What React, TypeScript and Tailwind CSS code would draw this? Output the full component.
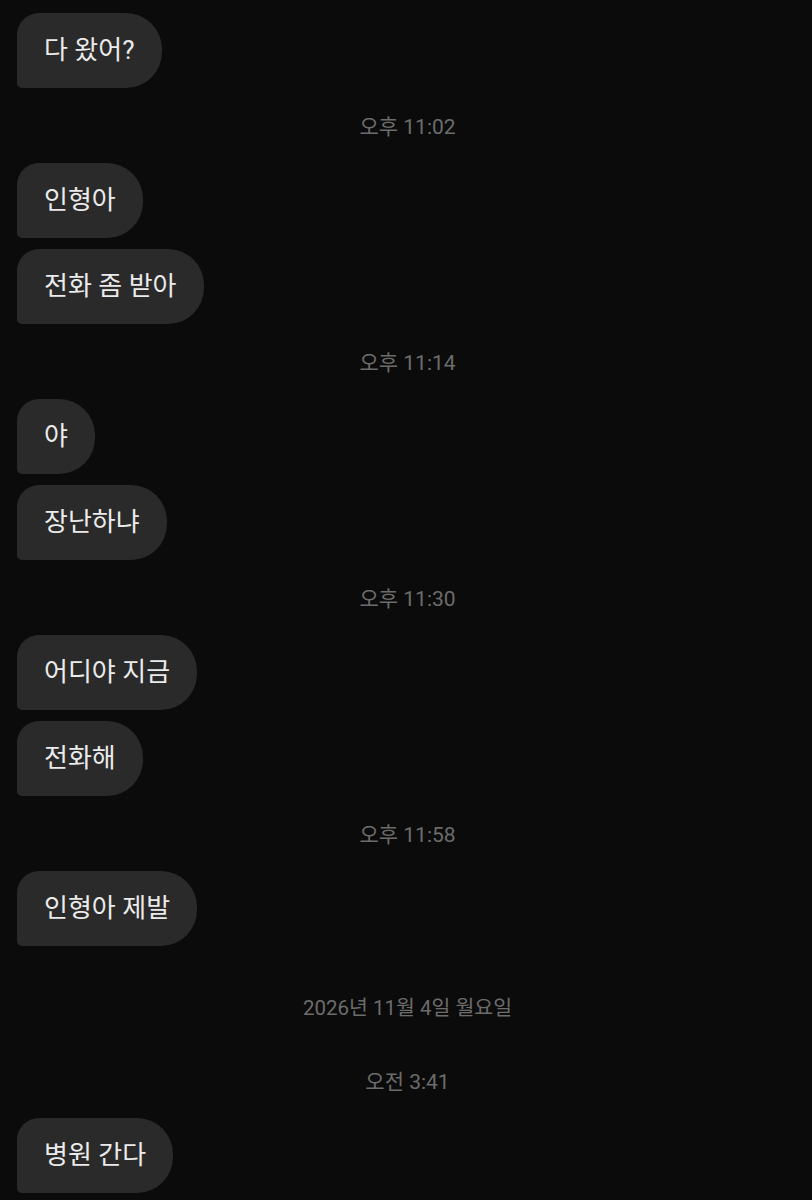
import React from "react";

type Item =
  | { kind: "msg"; text: string }
  | { kind: "time"; text: string }
  | { kind: "date"; text: string };

const items: Item[] = [
  { kind: "msg", text: "다 왔어?" },
  { kind: "time", text: "오후 11:02" },
  { kind: "msg", text: "인형아" },
  { kind: "msg", text: "전화 좀 받아" },
  { kind: "time", text: "오후 11:14" },
  { kind: "msg", text: "야" },
  { kind: "msg", text: "장난하냐" },
  { kind: "time", text: "오후 11:30" },
  { kind: "msg", text: "어디야 지금" },
  { kind: "msg", text: "전화해" },
  { kind: "time", text: "오후 11:58" },
  { kind: "msg", text: "인형아 제발" },
  { kind: "date", text: "2026년 11월 4일 월요일" },
  { kind: "time", text: "오전 3:41" },
  { kind: "msg", text: "병원 간다" },
];

function Bubble({ text, first }: { text: string; first: boolean }) {
  return (
    <div className={first ? "flex" : "flex mt-[11px]"}>
      <div className="h-[75px] flex items-center px-[27px] bg-[#2a2a2a] text-[#ebebeb] text-[26px] rounded-tl-[22px] rounded-tr-[36px] rounded-br-[36px] rounded-bl-[5px] whitespace-nowrap">
        {text}
      </div>
    </div>
  );
}

export default function App() {
  const out: React.ReactNode[] = [];
  let prevMsg = false;
  items.forEach((it, i) => {
    if (it.kind === "msg") {
      out.push(<Bubble key={i} text={it.text} first={!prevMsg} />);
      prevMsg = true;
    } else {
      const next = items[i + 1];
      const prev = items[i - 1];
      const mt = prev && prev.kind === "msg" ? (it.kind === "date" ? "mt-[48px]" : "mt-[26px]") : "mt-[47px]";
      const mb = next && next.kind === "msg" ? "mb-[21px]" : "mb-0";
      const size = it.kind === "date" ? "text-[20.5px]" : "text-[21px]";
      out.push(
        <div
          key={i}
          className={`h-[28px] flex items-center justify-center ${size} text-[#6c6c6c] ${mt} ${mb} mr-[14px]`}
        >
          {it.text}
        </div>
      );
      prevMsg = false;
    }
  });
  return (
    <div
      className="min-h-screen w-full bg-[#0b0b0b] pl-[17px] pt-[13px] pb-[8px]"
      style={{ fontFamily: "Roboto, 'Noto Sans CJK KR', sans-serif" }}
    >
      {out}
    </div>
  );
}
